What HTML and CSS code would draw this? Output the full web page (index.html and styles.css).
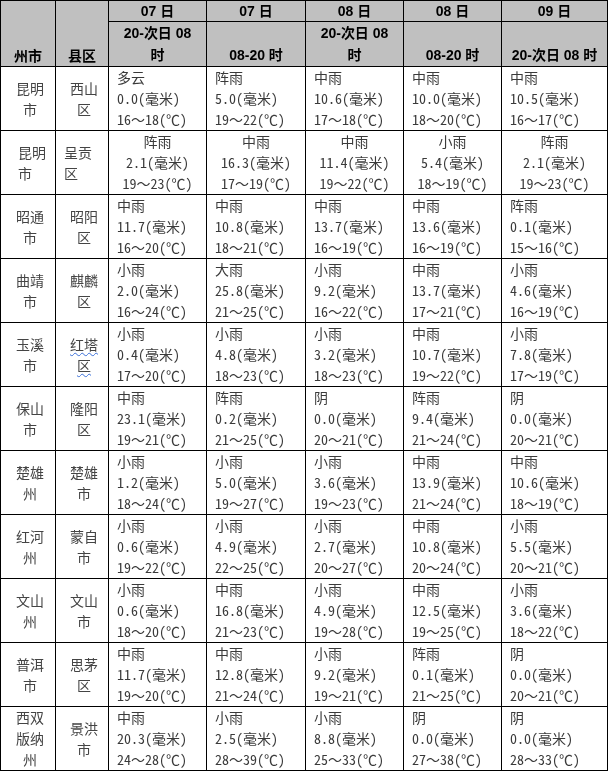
FILE: index.html
```html
<!DOCTYPE html>
<html lang="zh-CN">
<head>
<meta charset="utf-8">
<title>天气预报</title>
<link rel="stylesheet" href="styles.css">
</head>
<body>
<table class="fc">
<colgroup>
<col class="c-zs"><col class="c-xq"><col class="c-d3"><col class="c-d4"><col class="c-d5"><col class="c-d6"><col class="c-d7">
</colgroup>
<thead>
<tr class="h1">
<th rowspan="2" class="hb">州市</th>
<th rowspan="2" class="hb">县区</th>
<th>07 日</th><th>07 日</th><th>08 日</th><th>08 日</th><th>09 日</th>
</tr>
<tr class="h2">
<th>20-次日 08<br>时</th><th>08-20 时</th><th>20-次日 08<br>时</th><th>08-20 时</th><th>20-次日 08 时</th>
</tr>
</thead>
<tbody>
<tr>
<td class="lb">昆明<br>市</td><td class="lb">西山<br>区</td>
<td>多云<br>0.0(毫米)<br>16～18(℃)</td>
<td>阵雨<br>5.0(毫米)<br>19～22(℃)</td>
<td>中雨<br>10.6(毫米)<br>17～18(℃)</td>
<td>中雨<br>10.0(毫米)<br>18～20(℃)</td>
<td>中雨<br>10.5(毫米)<br>16～17(℃)</td>
</tr>
<tr class="ctr">
<td class="lb lb-left1">昆明<br>市</td><td class="lb lb-left2">呈贡<br>区</td>
<td>阵雨<br>2.1(毫米)<br>19～23(℃)</td>
<td>中雨<br>16.3(毫米)<br>17～19(℃)</td>
<td>中雨<br>11.4(毫米)<br>19～22(℃)</td>
<td>小雨<br>5.4(毫米)<br>18～19(℃)</td>
<td>阵雨<br>2.1(毫米)<br>19～23(℃)</td>
</tr>
<tr>
<td class="lb">昭通<br>市</td><td class="lb">昭阳<br>区</td>
<td>中雨<br>11.7(毫米)<br>16～20(℃)</td>
<td>中雨<br>10.8(毫米)<br>18～21(℃)</td>
<td>中雨<br>13.7(毫米)<br>16～19(℃)</td>
<td>中雨<br>13.6(毫米)<br>16～19(℃)</td>
<td>阵雨<br>0.1(毫米)<br>15～16(℃)</td>
</tr>
<tr>
<td class="lb">曲靖<br>市</td><td class="lb">麒麟<br>区</td>
<td>小雨<br>2.0(毫米)<br>16～24(℃)</td>
<td>大雨<br>25.8(毫米)<br>21～25(℃)</td>
<td>小雨<br>9.2(毫米)<br>16～22(℃)</td>
<td>中雨<br>13.7(毫米)<br>17～21(℃)</td>
<td>小雨<br>4.6(毫米)<br>16～19(℃)</td>
</tr>
<tr>
<td class="lb">玉溪<br>市</td><td class="lb"><span class="spell">红塔</span><br><span class="spell">区</span></td>
<td>小雨<br>0.4(毫米)<br>17～20(℃)</td>
<td>小雨<br>4.8(毫米)<br>18～23(℃)</td>
<td>小雨<br>3.2(毫米)<br>18～23(℃)</td>
<td>中雨<br>10.7(毫米)<br>19～22(℃)</td>
<td>小雨<br>7.8(毫米)<br>17～19(℃)</td>
</tr>
<tr>
<td class="lb">保山<br>市</td><td class="lb">隆阳<br>区</td>
<td>中雨<br>23.1(毫米)<br>19～21(℃)</td>
<td>阵雨<br>0.2(毫米)<br>21～25(℃)</td>
<td>阴<br>0.0(毫米)<br>20～21(℃)</td>
<td>阵雨<br>9.4(毫米)<br>21～24(℃)</td>
<td>阴<br>0.0(毫米)<br>20～21(℃)</td>
</tr>
<tr>
<td class="lb">楚雄<br>州</td><td class="lb">楚雄<br>市</td>
<td>小雨<br>1.2(毫米)<br>18～24(℃)</td>
<td>小雨<br>5.0(毫米)<br>19～27(℃)</td>
<td>小雨<br>3.6(毫米)<br>19～23(℃)</td>
<td>中雨<br>13.9(毫米)<br>21～24(℃)</td>
<td>中雨<br>10.6(毫米)<br>18～19(℃)</td>
</tr>
<tr>
<td class="lb">红河<br>州</td><td class="lb">蒙自<br>市</td>
<td>小雨<br>0.6(毫米)<br>19～22(℃)</td>
<td>小雨<br>4.9(毫米)<br>22～25(℃)</td>
<td>小雨<br>2.7(毫米)<br>20～27(℃)</td>
<td>中雨<br>10.8(毫米)<br>20～24(℃)</td>
<td>小雨<br>5.5(毫米)<br>20～21(℃)</td>
</tr>
<tr>
<td class="lb">文山<br>州</td><td class="lb">文山<br>市</td>
<td>小雨<br>0.6(毫米)<br>18～20(℃)</td>
<td>中雨<br>16.8(毫米)<br>21～23(℃)</td>
<td>小雨<br>4.9(毫米)<br>19～28(℃)</td>
<td>中雨<br>12.5(毫米)<br>19～25(℃)</td>
<td>小雨<br>3.6(毫米)<br>18～22(℃)</td>
</tr>
<tr>
<td class="lb">普洱<br>市</td><td class="lb">思茅<br>区</td>
<td>中雨<br>11.7(毫米)<br>19～20(℃)</td>
<td>中雨<br>12.8(毫米)<br>21～24(℃)</td>
<td>小雨<br>9.2(毫米)<br>19～21(℃)</td>
<td>阵雨<br>0.1(毫米)<br>21～25(℃)</td>
<td>阴<br>0.0(毫米)<br>20～21(℃)</td>
</tr>
<tr>
<td class="lb">西双<br>版纳<br>州</td><td class="lb">景洪<br>市</td>
<td>中雨<br>20.3(毫米)<br>24～28(℃)</td>
<td>小雨<br>2.5(毫米)<br>28～39(℃)</td>
<td>小雨<br>8.8(毫米)<br>25～33(℃)</td>
<td>阴<br>0.0(毫米)<br>27～38(℃)</td>
<td>阴<br>0.0(毫米)<br>28～33(℃)</td>
</tr>
</tbody>
</table>
</body>
</html>
```

FILE: styles.css
```css
html, body {
  margin: 0;
  padding: 0;
  background: #ffffff;
}

.fc {
  border-collapse: collapse;
  table-layout: fixed;
  width: 608px;
  font-family: "Noto Sans Mono CJK SC", "Noto Sans CJK SC", "Liberation Mono", monospace;
  font-size: 14px;
  color: #3a3a3a;
  will-change: transform;
}

.c-zs { width: 55px; }
.c-xq { width: 53px; }
.c-d3 { width: 98px; }
.c-d4 { width: 99px; }
.c-d5 { width: 98px; }
.c-d6 { width: 98px; }
.c-d7 { width: 106px; }

.fc th,
.fc td {
  border: 1px solid #000000;
  padding: 0;
}

.fc th {
  background: #c0c0c0;
  color: #000000;
  font-family: "Liberation Sans", "Noto Sans CJK SC", sans-serif;
  font-weight: bold;
  font-size: 14px;
  text-align: center;
  line-height: 22px;
}

.h1 th {
  height: 20px;
  line-height: 20px;
  vertical-align: middle;
}

.h2 th,
.fc th.hb {
  height: 44px;
  vertical-align: bottom;
}

.fc td {
  height: 63px;
  line-height: 21px;
  padding-left: 8px;
  text-align: left;
  vertical-align: middle;
  white-space: nowrap;
}

.fc td.lb {
  padding: 0 0 0 4px;
  text-align: center;
  color: #444444;
  font-family: "Noto Sans CJK SC", sans-serif;
}

.ctr td {
  text-align: center;
  padding-left: 0;
}

.fc td.lb-left1 {
  text-align: left;
  padding-left: 17px;
}

.fc td.lb-left2 {
  text-align: left;
  padding-left: 8px;
}

.spell {
  text-decoration: underline wavy #3b6fd8;
  text-decoration-thickness: 1px;
  text-underline-offset: 2px;
}
```
